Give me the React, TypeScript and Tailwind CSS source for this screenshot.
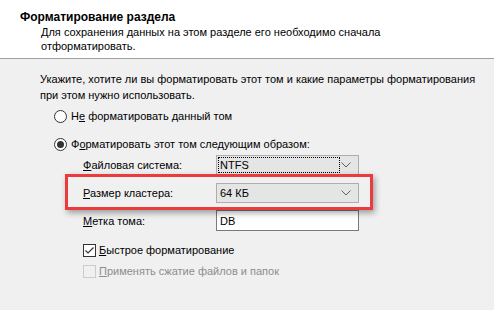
import React from 'react';

const Radio = ({ checked }: { checked?: boolean }) => (
  <span className="w-[13px] h-[13px] rounded-full border border-[#333333] bg-white flex items-center justify-center shrink-0">
    {checked && <span className="w-[7px] h-[7px] rounded-full bg-[#333333]" />}
  </span>
);

const Checkbox = ({ checked, disabled }: { checked?: boolean; disabled?: boolean }) => (
  <span
    className={`w-[13px] h-[13px] border flex items-center justify-center shrink-0 ${
      disabled ? 'border-[#cccccc] bg-[#f0f0f0]' : 'border-[#333333] bg-white'
    }`}
  >
    {checked && (
      <svg width="11" height="11" viewBox="0 0 11 11">
        <path d="M1.5 5.5 L4 8 L9.5 2.5" fill="none" stroke="#333333" strokeWidth="1.2" />
      </svg>
    )}
  </span>
);

const Chevron = () => (
  <svg width="10" height="6" viewBox="0 0 10 6" className="mr-[7px]">
    <path d="M0.5 0.5 L5 5 L9.5 0.5" fill="none" stroke="#606060" strokeWidth="1" />
  </svg>
);

const Select = ({ value, focused }: { value: string; focused?: boolean }) => (
  <div className="w-[143px] h-[20px] border border-[#adadad] bg-[#e5e5e5] flex items-center justify-between">
    <div
      className={`h-[16px] ml-[1px] w-[122px] flex items-center pl-[1px] ${
        focused ? 'border border-dotted border-black' : 'border border-transparent'
      }`}
    >
      {value}
    </div>
    <Chevron />
  </div>
);

export default function App() {
  return (
    <div className="w-[494px] h-[310px] bg-[#f0f0f0] text-[11px] leading-[16px] text-black font-['Liberation_Sans',Arial,sans-serif] overflow-hidden">
      <div className="h-[59px] bg-white border-b border-[#a0a0a0] pt-[9px]">
        <div className="pl-[20px] font-bold text-[12px]">Форматирование раздела</div>
        <div className="pl-[41px] leading-[14px]">
          Для сохранения данных на этом разделе его необходимо сначала
          <br />
          отформатировать.
        </div>
      </div>

      <div className="pl-[40px] mt-[12px] whitespace-nowrap">
        Укажите, хотите ли вы форматировать этот том и какие параметры форматирования
        <br />
        при этом нужно использовать.
      </div>

      <div className="pl-[54px] mt-[5px] flex flex-col gap-[12px]">
        <div className="flex items-center gap-[4px] h-[16px]">
          <Radio />
          <span>
            Н<u>е</u> форматировать данный том
          </span>
        </div>
        <div className="flex items-center gap-[4px] h-[16px]">
          <Radio checked />
          <span>
            Ф<u>о</u>рматировать этот том следующим образом:
          </span>
        </div>
      </div>

      <div className="relative mt-[3px] pl-[83px]">
        <div className="flex items-center h-[20px]">
          <span className="w-[133px]">
            <u>Ф</u>айловая система:
          </span>
          <Select value="NTFS" focused />
        </div>
        <div className="flex items-center h-[20px] mt-[8px]">
          <span className="w-[133px]">
            <u>Р</u>азмер кластера:
          </span>
          <Select value="64 КБ" />
        </div>
        <div className="flex items-center h-[21px] mt-[7px]">
          <span className="w-[133px]">
            <u>М</u>етка тома:
          </span>
          <div className="w-[143px] h-[21px] border border-[#7a7a7a] bg-white pl-[3px] flex items-center">DB</div>
        </div>
        <div className="absolute left-[65px] top-[19px] w-[308px] h-[36px] border-[3px] border-[#ea3b3f] shadow-[2px_3px_6px_rgba(0,0,0,0.35)]" />

        <div className="flex flex-col gap-[5px] mt-[11px]">
          <div className="flex items-center gap-[3px] h-[16px]">
            <Checkbox checked />
            <span>
              <u>Б</u>ыстрое форматирование
            </span>
          </div>
          <div className="flex items-center gap-[3px] h-[16px] text-[#8d8d8d]">
            <Checkbox disabled />
            <span>
              <u>П</u>рименять сжатие файлов и папок
            </span>
          </div>
        </div>
      </div>
    </div>
  );
}
